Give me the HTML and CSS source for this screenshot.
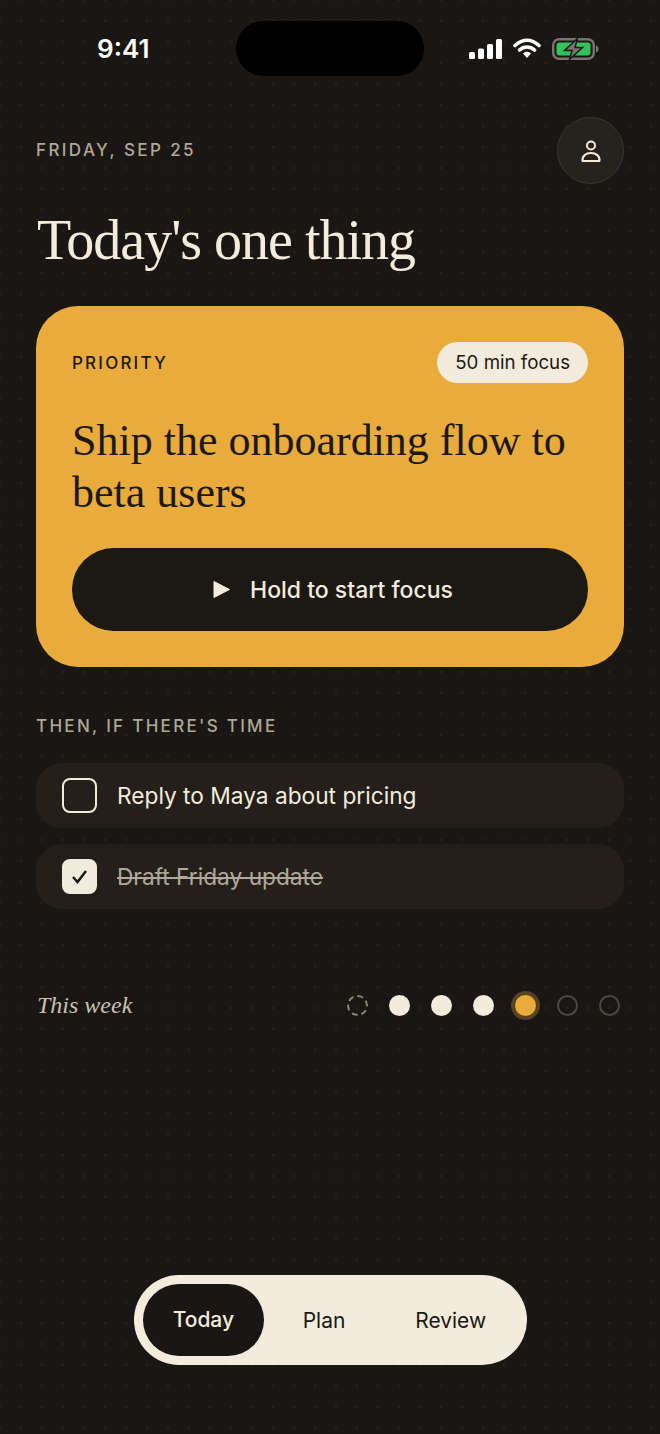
FILE: index.html
```html
<!DOCTYPE html>
<html>
<head>
<meta charset="utf-8"/>
<title>Today</title>
<link rel="stylesheet" href="styles.css">
</head>
<body>
<div class="page">
	<!-- status bar -->
	<div class="status">
		<div class="clock">9:41</div>
		<div class="island"></div>
		<div class="status-icons">
			<svg width="33" height="20" viewBox="0 0 33 20"><rect x="0" y="13" width="6" height="7" rx="1.5" fill="#fff"/><rect x="9" y="9.500" width="6" height="10.500" rx="1.500" fill="#fff"/><rect x="18" y="5" width="6" height="15" rx="1.500" fill="#fff"/><rect x="27" y="0" width="6" height="20" rx="1.500" fill="#fff"/></svg>
			<svg width="28" height="21" viewBox="0 0 28 21"><path d="M2 7.500C9.500 0.500 18.500 0.500 26 7.500M6.500 12C11 8 17 8 21.500 12" fill="none" stroke="#fff" stroke-width="3.600" stroke-linecap="round"/><path d="M10 15.500C12.300 13.300 15.700 13.300 18 15.500L14 20Z" fill="#fff"/></svg>
			<svg width="47" height="22" viewBox="0 0 47 22"><rect x="1.200" y="1.200" width="40.600" height="19.600" rx="6" fill="none" stroke="#777570" stroke-width="2.400"/><rect x="4.500" y="4.500" width="34" height="13" rx="3" fill="#34c25a"/><path d="M44 7.500c2 .6 2.600 2 2.600 3.500s-.6 2.900-2.600 3.500z" fill="#777570"/><path d="M25.500 0.500L12.500 12.500H20L17.500 21.500L30.500 9.500H23Z" fill="#777570" stroke="#191613" stroke-width="1.500"/></svg>
		</div>
	</div>

	<div class="head">
		<div class="date">FRIDAY, SEP 25</div>
		<div class="avatar">
			<svg width="24" height="24" viewBox="0 0 24 24" fill="none" stroke="#f3ecdd" stroke-width="2"><circle cx="12" cy="6.500" r="4"/><path d="M3.500 22c-.6-5 3.500-8 8.500-8s9.100 3 8.500 8z" stroke-linejoin="round"/></svg>
		</div>
	</div>

	<h1 class="title">Today's one thing</h1>

	<!-- main card -->
	<div class="card">
		<div class="card-top">
			<div class="priority">PRIORITY</div>
			<div class="chip">50 min focus</div>
		</div>
		<h2 class="task">Ship the onboarding flow to beta users</h2>
		<div class="hold">
			<svg width="17" height="19" viewBox="0 0 17 19"><path d="M1 1.500V17.500L16.500 9.500Z" fill="#f3ecdd" stroke="#f3ecdd" stroke-linejoin="round"/></svg>
			<span>Hold to start focus</span>
		</div>
	</div>

	<div class="then">THEN, IF THERE'S TIME</div>
	<div class="list">
		<div class="row">
			<div class="check"></div>
			<div class="row-text">Reply to Maya about pricing</div>
		</div>
		<div class="row">
			<div class="check on">
				<svg width="17" height="15" viewBox="0 0 17 15"><path d="M2 8L6.500 13L15 2" fill="none" stroke="#1c1814" stroke-width="2.500"/></svg>
			</div>
			<div class="row-text done">Draft Friday update</div>
		</div>
	</div>

	<div class="week">
		<div class="week-label">This week</div>
		<div class="dots">
			<span class="dot dashed"></span>
			<span class="dot full"></span>
			<span class="dot full"></span>
			<span class="dot full"></span>
			<span class="dot now"></span>
			<span class="dot empty"></span>
			<span class="dot empty"></span>
		</div>
	</div>

	<!-- tabs -->
	<div class="nav">
		<div class="tab active">Today</div>
		<div class="tab plan">Plan</div>
		<div class="tab review">Review</div>
	</div>
</div>
</body>
</html>
```

FILE: styles.css
```css
*{padding: 0;margin: 0;box-sizing: border-box}
body{
	width: 660px;
	height: 1434px;
	overflow: hidden;
	background-color: #191613;
	background-image: radial-gradient(circle, rgba(255,255,255,0.06) 1px, transparent 1.4px);
	background-size: 21px 21px;
	background-position: -10.5px -10.5px;
	font-family: "Inter", "Liberation Sans", sans-serif;
	color: #f3ecdd;
}
.page{
	height: 1434px;
	padding: 21px 36px 69px;
	display: flex;
	flex-direction: column;
}
.status{
	display: flex;
	align-items: center;
	height: 55px;
}
.clock{
	width: 200px;
	padding-left: 61px;
	font-family: "Inter", sans-serif;
	font-size: 26px;
	font-weight: 600;
	color: #fff;
}
.island{
	width: 188px;
	height: 55px;
	border-radius: 28px;
	background: #000;
}
.status-icons{
	margin-left: 45px;
	display: flex;
	align-items: center;
	gap: 11px;
}
.head{
	margin-top: 41px;
	display: flex;
	justify-content: space-between;
	align-items: center;
}
.date{
	margin-top: -2px;
	font-size: 17px;
	font-weight: 500;
	letter-spacing: 2.4px;
	color: #b0a898;
}
.avatar{
	width: 67px;
	height: 67px;
	border-radius: 50%;
	background: #26221e;
	border: 1.500px solid #3a3631;
	display: flex;
	align-items: center;
	justify-content: center;
}
.title{
	margin-top: 23px;
	padding-left: 1px;
	font-family: "Liberation Serif", serif;
	font-size: 56px;
	line-height: 66px;
	font-weight: 400;
	letter-spacing: -1px;
	color: #f3ecdd;
}
.card{
	margin-top: 33px;
	height: 361px;
	padding: 36px;
	border-radius: 42px;
	background: #e8ab3c;
	color: #1c1814;
}
.card-top{
	display: flex;
	justify-content: space-between;
	align-items: center;
}
.priority{
	font-size: 17px;
	font-weight: 500;
	letter-spacing: 2.2px;
}
.chip{
	height: 41px;
	line-height: 41px;
	padding: 0 18px;
	border-radius: 21px;
	background: #f3ecdd;
	font-size: 18.700px;
}
.task{
	margin-top: 32px;
	font-family: "Liberation Serif", serif;
	font-size: 44px;
	line-height: 52px;
	font-weight: 400;
}
.hold{
	margin-top: 29px;
	height: 83px;
	padding-left: 6px;
	border-radius: 42px;
	background: #1c1814;
	color: #f3ecdd;
	display: flex;
	align-items: center;
	justify-content: center;
	gap: 20px;
	font-size: 23px;
	font-weight: 500;
}
.then{
	margin-top: 49px;
	font-size: 17px;
	font-weight: 500;
	letter-spacing: 2.3px;
	color: #b0a898;
}
.list{
	margin-top: 27px;
	display: flex;
	flex-direction: column;
	gap: 16px;
}
.row{
	height: 65px;
	padding: 0 26px;
	border-radius: 26px;
	background: #241f1b;
	display: flex;
	align-items: center;
	gap: 20px;
}
.check{
	width: 35px;
	height: 35px;
	border: 2px solid #f3ecdd;
	border-radius: 8px;
	display: flex;
	align-items: center;
	justify-content: center;
}
.check.on{
	background: #f3ecdd;
}
.row-text{
	font-size: 22.700px;
}
.row-text.done{
	color: #b0a898;
	text-decoration: line-through;
}
.week{
	margin-top: 83px;
	display: flex;
	justify-content: space-between;
	align-items: center;
}
.week-label{
	padding-left: 1px;
	font-family: "Liberation Serif", serif;
	font-style: italic;
	font-size: 24px;
	color: #c9c1b1;
}
.dots{
	display: flex;
	gap: 21px;
	padding-right: 4px;
}
.dot{
	display: block;
	width: 21px;
	height: 21px;
	border-radius: 50%;
}
.dot.dashed{border: 2px dashed #8a8479}
.dot.full{background: #f3ecdd}
.dot.now{
	background: #e8ab3c;
	box-shadow: 0 0 0 4px rgba(232,171,60,0.3);
}
.dot.empty{border: 2px solid #4c4842}
.nav{
	margin: auto auto 0;
	width: 393px;
	height: 90px;
	padding: 9px;
	border-radius: 45px;
	background: #f3ecdd;
	display: flex;
	align-items: center;
	color: #1c1814;
	font-size: 21px;
}
.tab{
	text-align: center;
}
.tab.active{
	width: 122px;
	height: 72px;
	line-height: 72px;
	border-radius: 36px;
	background: #191613;
	color: #f3ecdd;
	font-weight: 500;
}
.tab.plan{width: 120px}
.tab.review{width: 134px}
```
